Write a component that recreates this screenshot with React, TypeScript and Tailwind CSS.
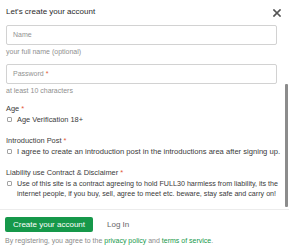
import React from "react";

const Req = () => <span className="text-[#e45735]"> *</span>;

const Box = () => (
  <span className="mt-[2px] inline-block h-[5px] w-[5px] shrink-0 rounded-[1px] border border-[#a3a3a3] bg-white" />
);

export default function App() {
  return (
    <div
      className="relative h-[250px] w-[289px] overflow-hidden bg-white text-[#222]"
      style={{ fontFamily: '"Liberation Sans", Arial, sans-serif' }}
    >
      {/* header */}
      <div className="flex h-[24px] items-center justify-between pl-[6px] pr-[8px]">
        <span className="text-[8px] leading-[10px] text-[#2a2a2a]">Let's create your account</span>
        <svg width="8" height="8" viewBox="0 0 8 8" className="mt-[1px]">
          <path d="M1 1 L7 7 M7 1 L1 7" stroke="#555" strokeWidth="1.7" strokeLinecap="square" />
        </svg>
      </div>

      {/* body */}
      <div className="relative h-[185px] border-b border-[#ececec] pl-[6px] pr-[3px]">
        <div className="mt-[1px] flex h-[20px] w-[271px] items-center rounded-[2px] border border-[#d2d2d2] pl-[6px] text-[7px] text-[#929292]">
          Name
        </div>
        <div className="mt-[1.5px] text-[7px] leading-[9px] text-[#8f8f8f]">your full name (optional)</div>

        <div className="mt-[8.5px] flex h-[20px] w-[271px] items-center rounded-[2px] border border-[#d2d2d2] pl-[6px] text-[7px] text-[#929292]">
          <span>
            Password<Req />
          </span>
        </div>
        <div className="mt-[1.5px] text-[7px] leading-[9px] text-[#8f8f8f]">at least 10 characters</div>

        <div className="mt-[9px] text-[7.4px] leading-[9px] text-[#3a3a3a]">
          Age<Req />
        </div>
        <div className="mt-[2px] flex gap-[5px] pl-[1px] text-[7.4px] leading-[9px] text-[#3a3a3a]">
          <Box />
          <span>Age Verification 18+</span>
        </div>

        <div className="mt-[12px] text-[7.4px] leading-[9px] text-[#3a3a3a]">
          Introduction Post<Req />
        </div>
        <div className="mt-[2px] flex gap-[5px] pl-[1px] text-[7.6px] leading-[9px] text-[#3a3a3a]">
          <Box />
          <span className="whitespace-nowrap">
            I agree to create an introduction post in the introductions area after signing up.
          </span>
        </div>

        <div className="mt-[12px] text-[7.4px] leading-[9px] text-[#3a3a3a]">
          Liability use Contract &amp; Disclaimer<Req />
        </div>
        <div className="mt-[2px] flex gap-[5px] pl-[1px] text-[7.15px] leading-[10px] text-[#3a3a3a]">
          <Box />
          <span className="whitespace-nowrap">
            Use of this site is a contract agreeing to hold FULL30 harmless from liability, its the
            <br />
            internet people, if you buy, sell, agree to meet etc. beware, stay safe and carry on!
          </span>
        </div>

        {/* scrollbar thumb */}
        <div className="absolute right-[1px] top-[59px] h-[123px] w-[3px] rounded-[1px] bg-[#8c8c8c]" />
      </div>

      {/* footer */}
      <div className="mt-[7px] flex items-center gap-[14px] pl-[5px]">
        <button className="flex h-[15px] w-[88px] items-center justify-center rounded-[2px] bg-[#16984a] text-[8px] text-white">
          Create your account
        </button>
        <span className="text-[8px] text-[#666]">Log In</span>
      </div>
      <div className="mt-[4px] pl-[5px] text-[7px] leading-[9px] text-[#8a8a8a]">
        By registering, you agree to the <span className="text-[#16984a]">privacy policy</span> and{" "}
        <span className="text-[#16984a]">terms of service</span>.
      </div>
    </div>
  );
}
